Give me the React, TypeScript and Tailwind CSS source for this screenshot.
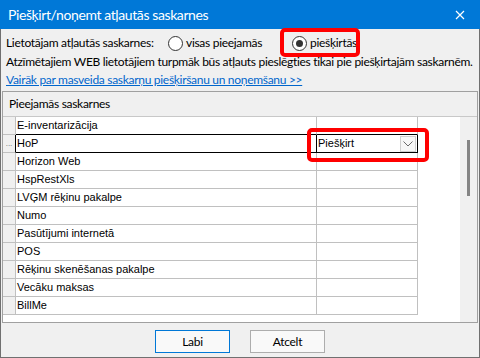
import React from "react"

const rows = [
  "E-inventarizācija",
  "HoP",
  "Horizon Web",
  "HspRestXls",
  "LVĢM rēķinu pakalpe",
  "Numo",
  "Pasūtījumi internetā",
  "POS",
  "Rēķinu skenēšanas pakalpe",
  "Vecāku maksas",
  "BillMe",
]

const SEL = 1

function Radio({ checked, label }: { checked?: boolean; label: string }) {
  return (
    <div className="flex items-center gap-[3px]">
      <span className="w-[15px] h-[15px] rounded-full border border-[#333] bg-white flex items-center justify-center">
        {checked && <span className="w-[7px] h-[7px] rounded-full bg-[#333]" />}
      </span>
      <span>{label}</span>
    </div>
  )
}

export default function App() {
  return (
    <div
      className="relative w-[480px] h-[358px] flex flex-col bg-[#f0f0f0] text-[12px] tracking-[-0.3px] text-black overflow-hidden whitespace-nowrap"
      style={{ fontFamily: "Lato, 'Liberation Sans', sans-serif" }}
    >
      {/* title bar */}
      <div className="h-[29px] bg-[#0078d7] flex items-center justify-between pl-[8px] pr-[15px] text-white text-[14px] tracking-[-0.4px] shrink-0">
        <span>Piešķirt/noņemt atļautās saskarnes</span>
        <svg width="10" height="10" viewBox="0 0 10 10" className="mt-[1px]">
          <path d="M1 1 L9 9 M9 1 L1 9" stroke="white" strokeWidth="1.2" />
        </svg>
      </div>

      <div className="flex-1 flex flex-col border-x border-b border-[#707070]">
        <div className="h-[20px] mt-[4px] flex items-center pl-[5px]">
          <span className="w-[162px]">Lietotājam atļautās saskarnes:</span>
          <div className="w-[118px]">
            <Radio label="visas pieejamās" />
          </div>
          <div className="ml-[6px]">
            <Radio checked label="piešķirtās" />
          </div>
        </div>
        <div className="h-[18px] flex items-center pl-[5px]">
          Atzīmētajiem WEB lietotājiem turpmāk būs atļauts pieslēgties tikai pie piešķirtajām saskarnēm.
        </div>
        <div className="h-[18px] flex items-center pl-[5px]">
          <span className="text-[#0066cc] underline">Vairāk par masveida saskarņu piešķiršanu un noņemšanu &gt;&gt;</span>
        </div>

        {/* grid panel */}
        <div className="mt-[2px] mx-[1px] h-[232px] border border-[#a0a0a0] flex flex-col">
          <div className="h-[25px] border-b border-[#c8c8c8] flex items-center pl-[6px] shrink-0">Pieejamās saskarnes</div>
          <div className="flex-1 flex">
            <div className="flex-1 bg-white">
              <div className="w-[415px] text-[11px] tracking-normal" style={{ fontFamily: "'Liberation Sans', Arial, sans-serif" }}>
                {rows.map((r, i) => {
                  const dark = i === SEL || i === SEL - 1
                  const sel = i === SEL
                  return (
                    <div key={r} className="flex h-[18px]">
                      <div
                        className={
                          "w-[13px] bg-[#f0f0f0] border-b border-r flex items-center justify-center text-[8px] text-[#666] " +
                          (sel ? "border-r-black border-b-[#c0c0c0]" : "border-[#c0c0c0]")
                        }
                      >
                        {sel ? "..." : ""}
                      </div>
                      <div
                        className={
                          "w-[301px] border-b border-r pl-[1px] flex items-center " +
                          (dark ? "border-b-black " : "border-b-[#c0c0c0] ") +
                          (sel ? "border-r-black" : "border-r-[#c0c0c0]")
                        }
                      >
                        {r}
                      </div>
                      <div
                        className={
                          "w-[101px] border-b border-r flex items-center pl-[1px] " +
                          (dark ? "border-b-black " : "border-b-[#c0c0c0] ") +
                          (sel ? "border-r-black" : "border-r-[#c0c0c0]")
                        }
                      >
                        {sel && (
                          <>
                            <span className="flex-1">Piešķirt</span>
                            <span className="w-[16px] h-[16px] mr-[1px] border border-[#cfcfcf] bg-[#f7f7f7] flex items-center justify-center">
                              <svg width="10" height="6" viewBox="0 0 10 6">
                                <path d="M0.5 0.5 L5 5 L9.5 0.5" stroke="#6b6b6b" fill="none" strokeWidth="1" />
                              </svg>
                            </span>
                          </>
                        )}
                      </div>
                    </div>
                  )
                })}
              </div>
            </div>
            {/* scrollbar */}
            <div className="w-[17px] bg-[#f0f0f0] pt-[23px] pl-[7px]">
              <div className="w-[3px] h-[56px] bg-[#858585]" />
            </div>
          </div>
        </div>

        {/* footer */}
        <div className="flex-1 flex justify-center items-start pt-[7px] gap-[20px]">
          <button className="w-[75px] h-[23px] border border-[#0078d7] bg-[#f9f9f9] text-[12px]">Labi</button>
          <button className="w-[75px] h-[23px] border border-[#adadad] bg-[#f9f9f9] text-[12px]">Atcelt</button>
        </div>
      </div>

      {/* annotation highlights */}
      <div className="absolute left-[280px] top-[28px] w-[80px] h-[29px] border-[4px] border-[#ff0000] rounded-[5px]" />
      <div className="absolute left-[307px] top-[128px] w-[122px] h-[34px] border-[4px] border-[#ff0000] rounded-[5px]" />
    </div>
  )
}
